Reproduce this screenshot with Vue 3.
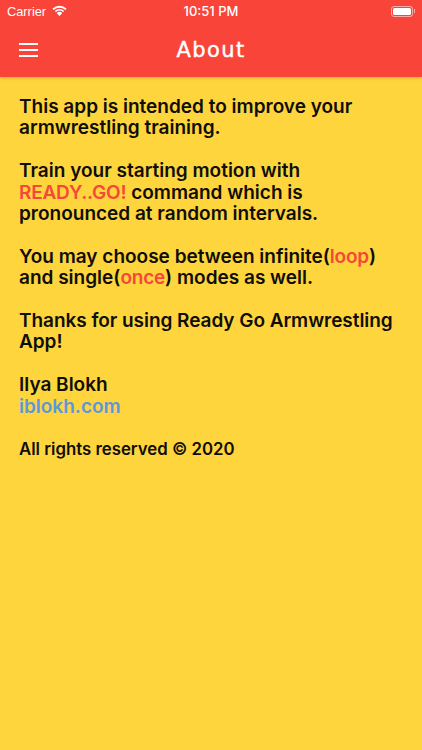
<template>
  <div class="screen">
    <header class="topbar">
      <div class="status">
        <div class="status-left">
          <span>Carrier</span>
          <svg class="wifi" viewBox="0 0 16 12" width="15" height="11">
            <path d="M8 12 4.9 8.8a4.4 4.4 0 0 1 6.2 0z" fill="#fff" />
            <path d="M1 4.8a10 10 0 0 1 14 0" fill="none" stroke="#fff" stroke-width="2.2" />
            <path d="M3.4 7.2a6.5 6.5 0 0 1 9.2 0" fill="none" stroke="#fff" stroke-width="1.6" />
          </svg>
        </div>
        <span class="clock">10:51 PM</span>
        <div class="battery">
          <div class="battery-body"><div class="battery-fill"></div></div>
          <div class="battery-cap"></div>
        </div>
      </div>
      <div class="navrow">
        <button class="menu-btn">
          <span></span><span></span><span></span>
        </button>
        <h1 class="title">About</h1>
      </div>
    </header>

    <main class="content">
      <p>This app is intended to improve your armwrestling training.</p>
      <p>Train your starting motion with<br /><em>READY..GO!</em> command which is pronounced at random intervals.</p>
      <p>You may choose between infinite(<em>loop</em>) and single(<em>once</em>) modes as well.</p>
      <p class="thanks">Thanks for using Ready Go Armwrestling App!</p>
      <p>Ilya Blokh<br /><a href="#" class="link">iblokh.com</a></p>
      <p class="rights">All rights reserved © 2020</p>
    </main>
  </div>
</template>

<script setup>
</script>

<style>
html, body {
  margin: 0;
  background: #ffd53d;
}
</style>

<style scoped>
.screen {
  min-height: 750px;
  background: #ffd53d;
  font-family: Inter, "Liberation Sans", sans-serif;
  display: flex;
  flex-direction: column;
}

.topbar {
  height: 77px;
  background: #f9443a;
  color: #fff;
  box-shadow: 0 1px 3px rgba(150, 90, 0, 0.35);
}

.status {
  height: 22px;
  padding: 0 7px;
  display: flex;
  align-items: center;
  justify-content: space-between;
  position: relative;
}

.status-left {
  display: flex;
  align-items: center;
  gap: 6px;
  font-family: "Liberation Sans", sans-serif;
  font-size: 12.8px;
}

.wifi {
  margin-top: -2px;
}

.clock {
  position: absolute;
  left: 0;
  right: 0;
  text-align: center;
  font-size: 13px;
  font-weight: 500;
}

.battery {
  display: flex;
  align-items: center;
  gap: 1px;
}

.battery-body {
  width: 22px;
  height: 11px;
  box-sizing: border-box;
  border: 1px solid rgba(255, 255, 255, 0.55);
  border-radius: 3px;
  padding: 1px;
}

.battery-fill {
  height: 100%;
  background: #fff;
  border-radius: 1.5px;
}

.battery-cap {
  width: 1px;
  height: 4px;
  background: rgba(255, 255, 255, 0.55);
}

.navrow {
  height: 55px;
  display: flex;
  align-items: center;
  justify-content: center;
  position: relative;
}

.menu-btn {
  position: absolute;
  left: 19px;
  top: 21px;
  width: 19px;
  padding: 0;
  border: 0;
  background: none;
  display: flex;
  flex-direction: column;
  gap: 4px;
}

.menu-btn span {
  height: 2px;
  background: #fff;
}

.title {
  margin: 0;
  font-family: "DejaVu Sans", sans-serif;
  font-size: 21px;
  font-weight: 400;
  letter-spacing: 1.4px;
  -webkit-text-stroke: 0.4px #fff;
}

.content {
  padding: 19px 19px 0;
  font-size: 19px;
  line-height: 21.4px;
  font-weight: 600;
  color: #0f0e08;
}

.content p {
  margin: 0 0 21.4px;
}

.content em {
  font-style: normal;
  letter-spacing: -0.2px;
  color: #f5483a;
}

.thanks {
  letter-spacing: -0.05px;
}

.link {
  color: #5b98dc;
  text-decoration: none;
}

.content .rights {
  font-size: 16.8px;
  margin-top: 22px;
}
</style>
